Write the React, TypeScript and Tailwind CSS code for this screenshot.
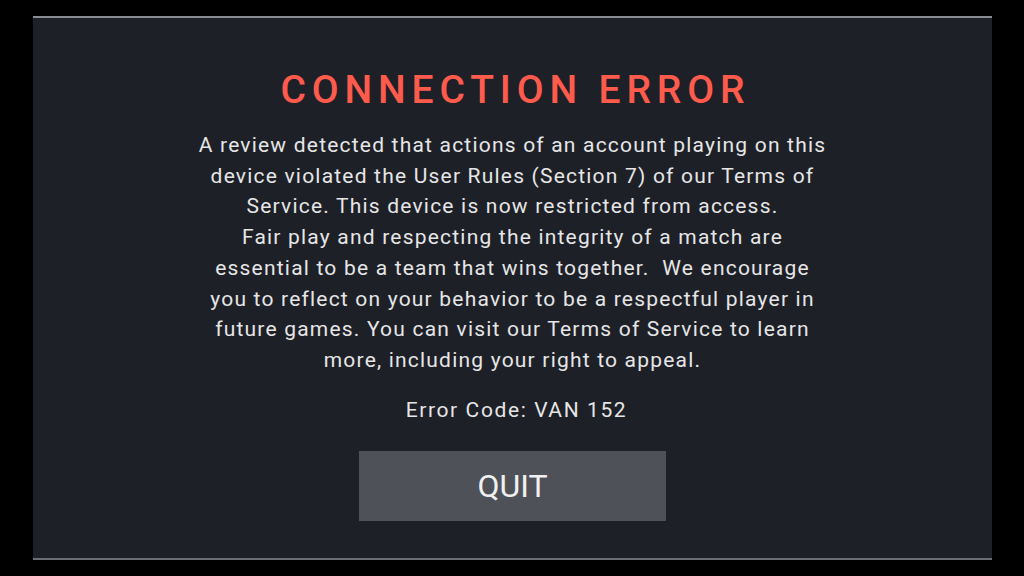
const lines = [
  "A review detected that actions of an account playing on this",
  "device violated the User Rules (Section 7) of our Terms of",
  "Service. This device is now restricted from access.",
  "Fair play and respecting the integrity of a match are",
  "essential to be a team that wins together.\u00a0 We encourage",
  "you to reflect on your behavior to be a respectful player in",
  "future games. You can visit our Terms of Service to learn",
  "more, including your right to appeal.",
];

export default function App() {
  return (
    <div className="flex h-[576px] w-[1024px] flex-col bg-black pt-[16px] pl-[33px] font-['Roboto',sans-serif]">
      <div className="flex h-[544px] w-[959px] flex-col items-center border-t-2 border-b-2 border-t-[#8a8c91] border-b-[#6c6e74] bg-[#1e2028]">
        <h1 className="mt-[50px] pl-[0.15em] text-[39px] leading-[44px] font-medium tracking-[0.15em] text-[#ff5b4c]">
          CONNECTION ERROR
        </h1>
        <div className="mt-[18px] text-center text-[21px] leading-[30.7px] tracking-[1.2px] text-[#e6e6e6]">
          {lines.map((l, i) => (
            <p key={i}>{l}</p>
          ))}
        </div>
        <p className="mt-[19px] pl-[8px] text-[21px] leading-[30px] tracking-[1.6px] text-[#e6e6e6]">Error Code: VAN 152</p>
        <button className="mt-[26px] flex h-[70px] w-[307px] items-center justify-center bg-[#4f5159] text-[32px] text-[#f0f0f0]">
          QUIT
        </button>
      </div>
    </div>
  );
}
